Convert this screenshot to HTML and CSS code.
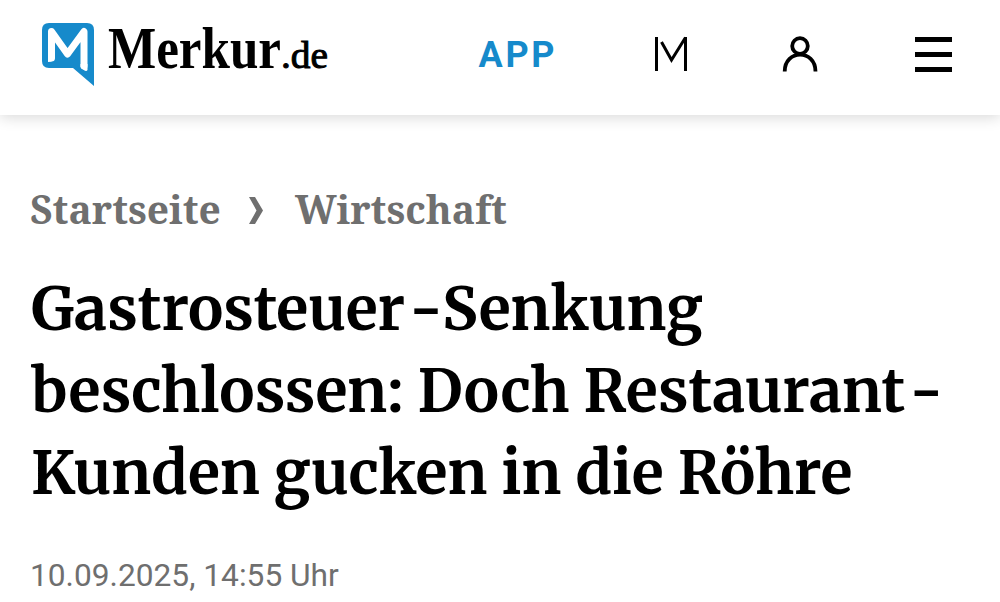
FILE: index.html
```
<!DOCTYPE html>
<html lang="de">
<head>
  <meta charset="UTF-8">
  <meta name="viewport" content="width=device-width, initial-scale=1.0">
  <title>Gastrosteuer-Senkung beschlossen</title>
  <link rel="stylesheet" href="styles.css">
</head>

<body>
  <header class="header">
    <a class="logo" href="#">
      <svg width="290" height="70" viewBox="0 0 290 70">
        <path fill="#168acb" d="M8 5H46Q53 5 53 12V68L32 50H8Q1 50 1 43V12Q1 5 8 5Z"/>
        <path fill="none" stroke="#fff" stroke-width="7" stroke-linecap="round" stroke-linejoin="round" d="M10.500 40V13.500L26.500 36L43 13.500V48"/>
        <path fill="#fff" d="M7 38V44Q13 44 14 39ZM39.500 46V49Q45 55 46.500 52V46Z"/>
        <text class="logo-name" x="67" y="50" textLength="173" lengthAdjust="spacingAndGlyphs">Merkur</text>
        <text class="logo-tld" x="240" y="50" textLength="47" lengthAdjust="spacingAndGlyphs">.de</text>
      </svg>
    </a>
    <nav class="nav">
      <a class="nav-app" href="#">APP</a>
      <a class="nav-m" href="#">
        <svg width="34" height="36" viewBox="0 0 34 36" fill="none" stroke="#000" stroke-width="3">
          <path d="M2.500 1V35M31.500 35V1"/>
          <path d="M7.500 6L17.500 24L31.500 1.500"/>
        </svg>
      </a>
      <a class="nav-user" href="#">
        <svg width="36" height="36" viewBox="0 0 36 36" fill="none" stroke="#000" stroke-width="3.800">
          <circle cx="18" cy="10" r="7.800"/>
          <path d="M2.700 35.500C2.700 13 33.500 13 33.500 35.500"/>
        </svg>
      </a>
      <a class="nav-menu" href="#">
        <span></span>
        <span></span>
        <span></span>
      </a>
    </nav>
  </header>

  <main class="article">
    <div class="breadcrumb">
      <a class="crumb" href="#">Startseite</a>
      <svg class="arrow" width="14" height="27" viewBox="0 0 14 27">
        <path fill="#6f6f6f" d="M0 0H6L14 13.500L6 27H0L7.500 13.500Z"/>
      </svg>
      <a class="crumb" href="#">Wirtschaft</a>
    </div>
    <h1 class="headline">Gastrosteuer<span class="hyphen">-</span>Senkung<br>
      beschlossen: Doch Restaurant<span class="hyphen">-</span><br>
      Kunden gucken in die Röhre</h1>
    <p class="date">10.09.2025, 14:55 Uhr</p>
  </main>
</body>
</html>
```
FILE: styles.css
```
body {
    margin: 0;
    background-color: #fff;
    font-family: Roboto, sans-serif;
    overflow: hidden;
}

a {
    color: inherit;
    text-decoration: none;
}

svg {
    display: block;
}

.header {
    display: flex;
    justify-content: space-between;
    box-sizing: border-box;
    height: 115px;
    padding: 18px 48px 0 41px;
    box-shadow: 0 2px 14px rgba(0, 0, 0, 0.16);
}

.logo svg {
    overflow: visible;
}

.logo-name,
.logo-tld {
    font-family: 'Liberation Serif', serif;
}

.logo-name {
    font-size: 60px;
    font-weight: bold;
}

.logo-tld {
    font-size: 37px;
    stroke: #000;
    stroke-width: 1px;
}

.nav {
    display: flex;
    height: 72px;
    align-items: center;
}

.nav-app {
    margin-right: 97px;
    padding-top: 1px;
    color: #168acb;
    font-size: 36px;
    font-weight: bold;
    letter-spacing: 2.6px;
}

.nav-m {
    margin-right: 94px;
}

.nav-user {
    margin-right: 97px;
}

.nav-menu {
    display: flex;
    flex-direction: column;
    gap: 10px;
    width: 37px;
}

.nav-menu span {
    height: 5px;
    background-color: #000;
}

.article {
    padding: 68px 30px 0;
}

.breadcrumb {
    display: flex;
    align-items: center;
    height: 50px;
    color: #6f6f6f;
    font-family: 'Noto Serif', 'DejaVu Serif Condensed', serif;
    font-size: 39px;
    font-weight: bold;
}

.arrow {
    margin: 4px 32px 0 28px;
}

.headline {
    margin: 35px 0 0 1px;
    font-family: Merriweather, 'Liberation Serif', serif;
    font-size: 59.1px;
    font-weight: bold;
    line-height: 82px;
    white-space: nowrap;
}

.hyphen {
    margin: 0 -1px 0 4px;
}

.date {
    margin: 42px 0 0;
    color: #6f6f6f;
    font-size: 31.7px;
    line-height: 40px;
}
```
